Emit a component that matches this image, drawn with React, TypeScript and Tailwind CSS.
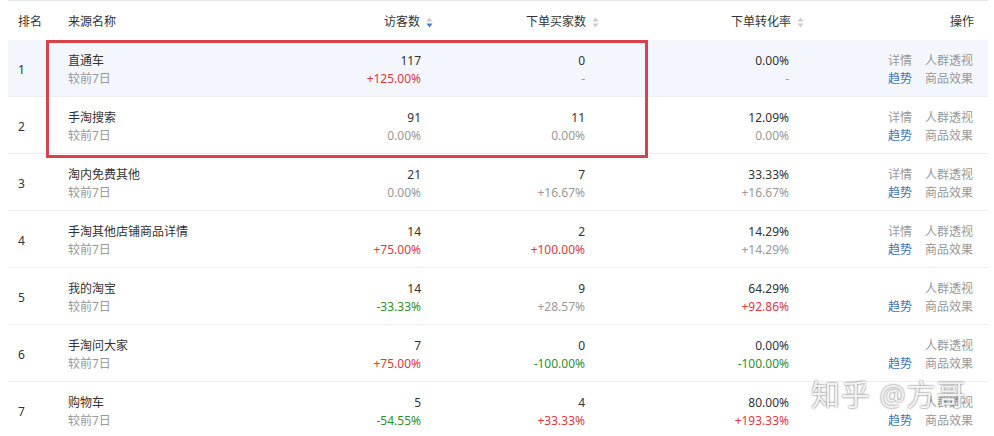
import React from "react";

type Tone = "red" | "green" | "grey";

type Cell = { main: string; sub: string; tone: Tone };

type Row = {
  rank: number;
  name: string;
  visitors: Cell;
  buyers: Cell;
  rate: Cell;
  detail: boolean;
};

const rows: Row[] = [
  { rank: 1, name: "直通车", visitors: { main: "117", sub: "+125.00%", tone: "red" }, buyers: { main: "0", sub: "-", tone: "grey" }, rate: { main: "0.00%", sub: "-", tone: "grey" }, detail: true },
  { rank: 2, name: "手淘搜索", visitors: { main: "91", sub: "0.00%", tone: "grey" }, buyers: { main: "11", sub: "0.00%", tone: "grey" }, rate: { main: "12.09%", sub: "0.00%", tone: "grey" }, detail: true },
  { rank: 3, name: "淘内免费其他", visitors: { main: "21", sub: "0.00%", tone: "grey" }, buyers: { main: "7", sub: "+16.67%", tone: "grey" }, rate: { main: "33.33%", sub: "+16.67%", tone: "grey" }, detail: true },
  { rank: 4, name: "手淘其他店铺商品详情", visitors: { main: "14", sub: "+75.00%", tone: "red" }, buyers: { main: "2", sub: "+100.00%", tone: "red" }, rate: { main: "14.29%", sub: "+14.29%", tone: "grey" }, detail: true },
  { rank: 5, name: "我的淘宝", visitors: { main: "14", sub: "-33.33%", tone: "green" }, buyers: { main: "9", sub: "+28.57%", tone: "grey" }, rate: { main: "64.29%", sub: "+92.86%", tone: "red" }, detail: false },
  { rank: 6, name: "手淘问大家", visitors: { main: "7", sub: "+75.00%", tone: "red" }, buyers: { main: "0", sub: "-100.00%", tone: "green" }, rate: { main: "0.00%", sub: "-100.00%", tone: "green" }, detail: false },
  { rank: 7, name: "购物车", visitors: { main: "5", sub: "-54.55%", tone: "green" }, buyers: { main: "4", sub: "+33.33%", tone: "red" }, rate: { main: "80.00%", sub: "+193.33%", tone: "red" }, detail: false },
];

const toneClass: Record<Tone, string> = {
  red: "text-[#e0383e]",
  green: "text-[#2f8f2f]",
  grey: "text-[#999]",
};

function SortIcon({ active }: { active?: boolean }) {
  return (
    <svg width="7" height="11" viewBox="0 0 7 11" className="ml-[6px]">
      <path d="M3.5 0.5 L6.5 4.5 H0.5 Z" fill="#c9ccd3" />
      <path d="M3.5 10.5 L6.5 6.5 H0.5 Z" fill={active ? "#3d7fd9" : "#c9ccd3"} />
    </svg>
  );
}

function NumCell({ cell, width }: { cell: Cell; width: string }) {
  return (
    <div className={`${width} flex flex-col items-end`}>
      <span className="text-[#333]">{cell.main}</span>
      <span className={toneClass[cell.tone]}>{cell.sub}</span>
    </div>
  );
}

export default function App() {
  return (
    <div
      className="relative w-[994px] h-[436px] overflow-hidden bg-white text-[12px] leading-[18px]"
      style={{ fontFamily: '"Noto Sans", "Noto Sans CJK SC", sans-serif' }}
    >
      <div className="border-t border-[#e8e8e8] mx-[8px] w-[980px]">
        <div className="flex items-center h-[39px] pt-[3px] text-[#333]">
          <div className="w-[50px] pl-[10px]">排名</div>
          <div className="w-[250px] pl-[10px]">来源名称</div>
          <div className="w-[125px] flex items-center justify-end">
            访客数<SortIcon active />
          </div>
          <div className="w-[166px] flex items-center justify-end">
            下单买家数<SortIcon />
          </div>
          <div className="w-[205px] flex items-center justify-end">
            下单转化率<SortIcon />
          </div>
          <div className="w-[170px] text-right">操作</div>
        </div>

        {rows.map((r) => (
          <div
            key={r.rank}
            className={`flex items-center h-[57px] pt-[3px] border-b border-[#eeeeee] ${r.rank === 1 ? "bg-[#f3f7fd]" : ""}`}
          >
            <div className="w-[50px] pl-[10px] text-[#333]">{r.rank}</div>
            <div className="w-[250px] pl-[10px] flex flex-col">
              <span className="text-[#333]">{r.name}</span>
              <span className="text-[#999]">较前7日</span>
            </div>
            <NumCell cell={r.visitors} width="w-[113px]" />
            <NumCell cell={r.buyers} width="w-[164px]" />
            <NumCell cell={r.rate} width="w-[204px]" />
            <div className="w-[184px] flex justify-end">
              <div className="grid grid-cols-[auto_auto] gap-x-[13px] text-[#999]">
                <span>{r.detail ? "详情" : ""}</span>
                <span>人群透视</span>
                <span className="text-[#3a73bd]">趋势</span>
                <span>商品效果</span>
              </div>
            </div>
          </div>
        ))}
      </div>

      <div className="absolute left-[46px] top-[40px] w-[602px] h-[118px] border-[3px] border-[#d8434b]" />

      <div className="absolute left-[811px] top-[376px] text-[29px] leading-[38px] tracking-[1px] text-[#f2f2f2] drop-shadow-[0_0_1px_rgba(90,90,90,0.9)]">
        知乎 @方哥
      </div>
    </div>
  );
}
